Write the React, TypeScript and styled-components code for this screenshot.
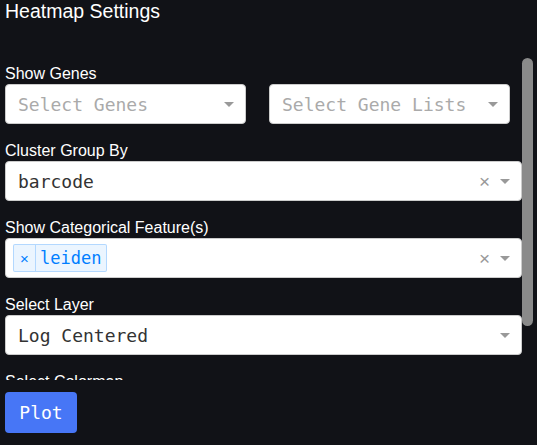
import styled, { createGlobalStyle } from "styled-components";

// Page-wide reset: dark panel background, no body margin
const GlobalStyle = createGlobalStyle`
    html, body {
        margin: 0;
        padding: 0;
        background-color: #111217;
        height: 100%;
        overflow: hidden;
    }
    * {
        box-sizing: border-box;
    }
`;

const mono = `"DejaVu Sans Mono", "Liberation Mono", monospace`;

// Outer panel
const StyledPanel = styled.div`
    display: flex;
    flex-direction: column;
    padding: 0 4px 0 5px;
    height: 445px;
    font-family: "Liberation Sans", Arial, sans-serif;
    color: #ffffff;
`;

// "Heatmap Settings" heading
const StyledTitle = styled.h3`
    margin: 0;
    font-size: 19.5px;
    font-weight: normal;
    line-height: 22px;
    height: 58px;
`;

// Settings list with its scrollbar column beside it
const StyledScrollFrame = styled.div`
    display: flex;
    height: 322px;
`;

const StyledScrollContent = styled.div`
    flex: 1;
    overflow: hidden;
    padding-top: 5px;
`;

const StyledScrollTrack = styled.div`
    width: 11px;
    flex-shrink: 0;
`;

const StyledScrollThumb = styled.div`
    height: 268px;
    background-color: #8a8a8a;
    border-radius: 6px;
`;

// One label + dropdown block
const StyledField = styled.div`
    margin-bottom: 16px;
`;

const StyledLabel = styled.div`
    font-size: 16px;
    line-height: 21px;
    color: #ffffff;
`;

// Two dropdowns side by side
const StyledPairRow = styled.div`
    display: flex;
    gap: 23px;
`;

// The dropdown control box
const StyledSelect = styled.div<{ $width?: string }>`
    display: flex;
    align-items: center;
    width: ${(p) => p.$width ?? "100%"};
    height: 40px;
    background-color: #ffffff;
    border: 1px solid #cccccc;
    border-radius: 4px;
    padding: 0 11px 0 7px;
    font-family: ${mono};
    font-size: 18px;
`;

const StyledValueArea = styled.div`
    flex: 1;
    display: flex;
    align-items: center;
    overflow: hidden;
    white-space: nowrap;
`;

const StyledValue = styled.span<{ $placeholder?: boolean }>`
    padding-left: 5px;
    color: ${(p) => (p.$placeholder ? "#aaaaaa" : "#333333")};
`;

// Multi-select tag (e.g. "leiden")
const StyledTag = styled.div`
    display: flex;
    align-items: stretch;
    height: 28px;
    background-color: rgba(0, 126, 255, 0.08);
    border: 1px solid rgba(0, 126, 255, 0.24);
    border-radius: 2px;
    color: #007eff;
    font-size: 17px;
`;

const StyledTagIcon = styled.span`
    display: flex;
    align-items: center;
    justify-content: center;
    width: 22px;
    border-right: 1px solid rgba(0, 126, 255, 0.24);
    font-family: "Liberation Sans", Arial, sans-serif;
    font-size: 15px;
`;

const StyledTagLabel = styled.span`
    display: flex;
    align-items: center;
    padding: 0 5px 0 4px;
`;

const StyledClear = styled.span`
    font-family: "Liberation Sans", Arial, sans-serif;
    font-size: 19px;
    line-height: 1;
    color: #999999;
    margin-right: 10px;
`;

// Little grey caret on the right of each dropdown
const StyledArrow = styled.span`
    width: 0;
    height: 0;
    border-style: solid;
    border-width: 5px 5px 2.5px;
    border-color: #999999 transparent transparent;
    margin-top: 3px;
`;

const StyledButtonRow = styled.div`
    padding-top: 12px;
`;

const StyledPlotButton = styled.button`
    width: 72px;
    height: 41px;
    background-color: #4776f6;
    color: #ffffff;
    border: none;
    border-radius: 4px;
    font-family: ${mono};
    font-size: 18px;
    cursor: pointer;
`;

type DropdownProps = {
    placeholder?: string;
    value?: string;
    tags?: string[];
    clearable?: boolean;
    width?: string;
};

function Dropdown({ placeholder, value, tags, clearable, width }: DropdownProps) {
    return (
        <StyledSelect $width={width}>
            <StyledValueArea>
                {tags &&
                    tags.map((t) => (
                        <StyledTag key={t}>
                            <StyledTagIcon>×</StyledTagIcon>
                            <StyledTagLabel>{t}</StyledTagLabel>
                        </StyledTag>
                    ))}
                {!tags && (
                    <StyledValue $placeholder={!value}>{value ?? placeholder}</StyledValue>
                )}
            </StyledValueArea>
            {clearable && <StyledClear>×</StyledClear>}
            <StyledArrow />
        </StyledSelect>
    );
}

export default function App() {
    return (
        <>
            <GlobalStyle />
            <StyledPanel>
                <StyledTitle>Heatmap Settings</StyledTitle>

                <StyledScrollFrame>
                    <StyledScrollContent>
                        <StyledField>
                            <StyledLabel>Show Genes</StyledLabel>
                            <StyledPairRow>
                                <Dropdown placeholder="Select Genes" width="241px" />
                                <Dropdown placeholder="Select Gene Lists" width="241px" />
                            </StyledPairRow>
                        </StyledField>

                        <StyledField>
                            <StyledLabel>Cluster Group By</StyledLabel>
                            <Dropdown value="barcode" clearable />
                        </StyledField>

                        <StyledField>
                            <StyledLabel>Show Categorical Feature(s)</StyledLabel>
                            <Dropdown tags={["leiden"]} clearable />
                        </StyledField>

                        <StyledField>
                            <StyledLabel>Select Layer</StyledLabel>
                            <Dropdown value="Log Centered" />
                        </StyledField>

                        <StyledField>
                            <StyledLabel>Select Colormap</StyledLabel>
                        </StyledField>
                    </StyledScrollContent>

                    <StyledScrollTrack>
                        <StyledScrollThumb />
                    </StyledScrollTrack>
                </StyledScrollFrame>

                <StyledButtonRow>
                    <StyledPlotButton>Plot</StyledPlotButton>
                </StyledButtonRow>
            </StyledPanel>
        </>
    );
}
